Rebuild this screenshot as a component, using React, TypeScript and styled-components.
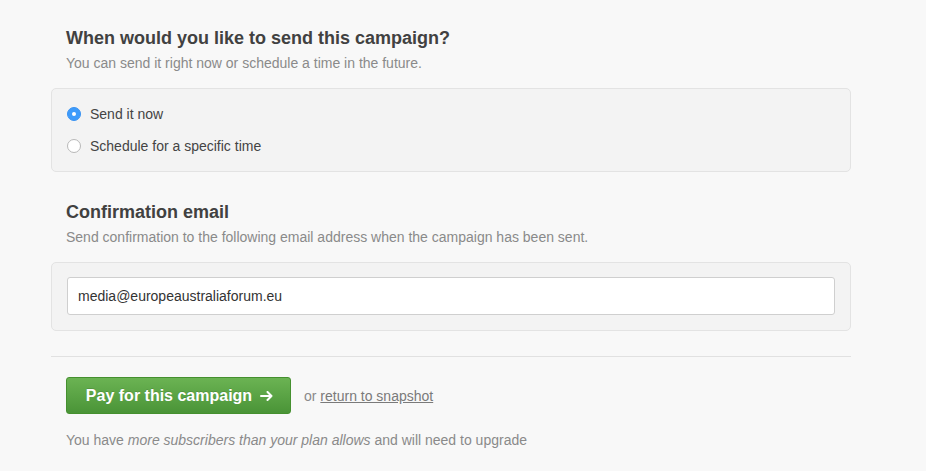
import React from "react";
import styled, { createGlobalStyle } from "styled-components";

const Global = createGlobalStyle`
  html, body { margin: 0; padding: 0; background: #f8f8f8; }
  body { font-family: "Liberation Sans", Arial, Helvetica, sans-serif; color: #444; }
`;

const Page = styled.div`
  width: 800px;
  margin-left: 51px;
  padding-top: 26px;
`;

const Header = styled.div`
  padding: 0 15px;
`;

const Title = styled.h2`
  margin: 0;
  font-size: 18px;
  line-height: 24px;
  font-weight: bold;
  color: #414141;
`;

const Subtitle = styled.p`
  margin: 4px 0 0;
  font-size: 14px;
  line-height: 18px;
  color: #8a8a8a;
`;

const Panel = styled.div<{ $tight?: boolean }>`
  margin-top: 16px;
  background: #f3f3f3;
  border: 1px solid #e3e3e3;
  border-radius: 5px;
  padding: ${(p) => (p.$tight ? "14px 15px 15px" : "15px")};
  display: flex;
  flex-direction: column;
  gap: 12px;
`;

const RadioRow = styled.label`
  display: flex;
  align-items: center;
  gap: 9px;
  height: 20px;
  font-size: 14px;
  color: #444;
`;

const Radio = styled.span<{ $checked?: boolean }>`
  width: 14px;
  height: 14px;
  box-sizing: border-box;
  border-radius: 50%;
  flex: none;
  display: flex;
  align-items: center;
  justify-content: center;
  background: ${(p) => (p.$checked ? "#3d9bfb" : "#fff")};
  border: 1px solid ${(p) => (p.$checked ? "#3a93f2" : "#b8b8b8")};
  &::after {
    content: "";
    width: 4px;
    height: 4px;
    border-radius: 50%;
    background: #fff;
    display: ${(p) => (p.$checked ? "block" : "none")};
  }
`;

const Section = styled.div<{ $top?: number }>`
  margin-top: ${(p) => p.$top ?? 0}px;
`;

const EmailInput = styled.div`
  height: 38px;
  box-sizing: border-box;
  background: #fff;
  border: 1px solid #cfcfcf;
  border-radius: 3px;
  padding: 0 10px;
  display: flex;
  align-items: center;
  font-size: 14px;
  color: #333;
`;

const Divider = styled.hr`
  margin: 25px 0 0;
  border: 0;
  border-top: 1px solid #e1e1e1;
  height: 0;
`;

const Actions = styled.div`
  display: flex;
  align-items: center;
  gap: 13px;
  padding: 20px 15px 0;
`;

const PayButton = styled.button`
  width: 225px;
  height: 37px;
  box-sizing: border-box;
  border: 1px solid #45902f;
  border-radius: 3px;
  background: linear-gradient(#6bb353, #4a9437);
  color: #fff;
  font-family: inherit;
  font-weight: bold;
  font-size: 16px;
  display: flex;
  align-items: center;
  justify-content: center;
  gap: 8px;
  padding: 0 0 0 2px;
  text-shadow: 0 -1px 0 rgba(0, 0, 0, 0.12);
  svg { flex: none; }
`;

const OrText = styled.span`
  font-size: 14px;
  color: #8a8a8a;
`;

const Link = styled.a`
  color: #7a7a7a;
  text-decoration: underline;
`;

const Note = styled.p`
  margin: 17px 0 0;
  padding: 0 15px;
  font-size: 14px;
  line-height: 18px;
  color: #8a8a8a;
  em { font-style: italic; }
`;

const Arrow = () => (
  <svg width="13" height="10" viewBox="0 0 13 10" fill="none" stroke="#fff" strokeWidth="2" strokeLinecap="round" strokeLinejoin="round">
    <path d="M1 5h10.5M7.5 1l4 4-4 4" />
  </svg>
);

export default function App() {
  return (
    <>
      <Global />
      <Page>
        <Header>
          <Title>When would you like to send this campaign?</Title>
          <Subtitle>You can send it right now or schedule a time in the future.</Subtitle>
        </Header>
        <Panel>
          <RadioRow>
            <Radio $checked />
            Send it now
          </RadioRow>
          <RadioRow>
            <Radio />
            Schedule for a specific time
          </RadioRow>
        </Panel>

        <Section $top={28}>
          <Header>
            <Title>Confirmation email</Title>
            <Subtitle>Send confirmation to the following email address when the campaign has been sent.</Subtitle>
          </Header>
          <Panel $tight>
            <EmailInput>media@europeaustraliaforum.eu</EmailInput>
          </Panel>
        </Section>

        <Divider />
        <Actions>
          <PayButton>
            Pay for this campaign
            <Arrow />
          </PayButton>
          <OrText>
            or <Link>return to snapshot</Link>
          </OrText>
        </Actions>
        <Note>
          You have <em>more subscribers than your plan allows</em> and will need to upgrade
        </Note>
      </Page>
    </>
  );
}
